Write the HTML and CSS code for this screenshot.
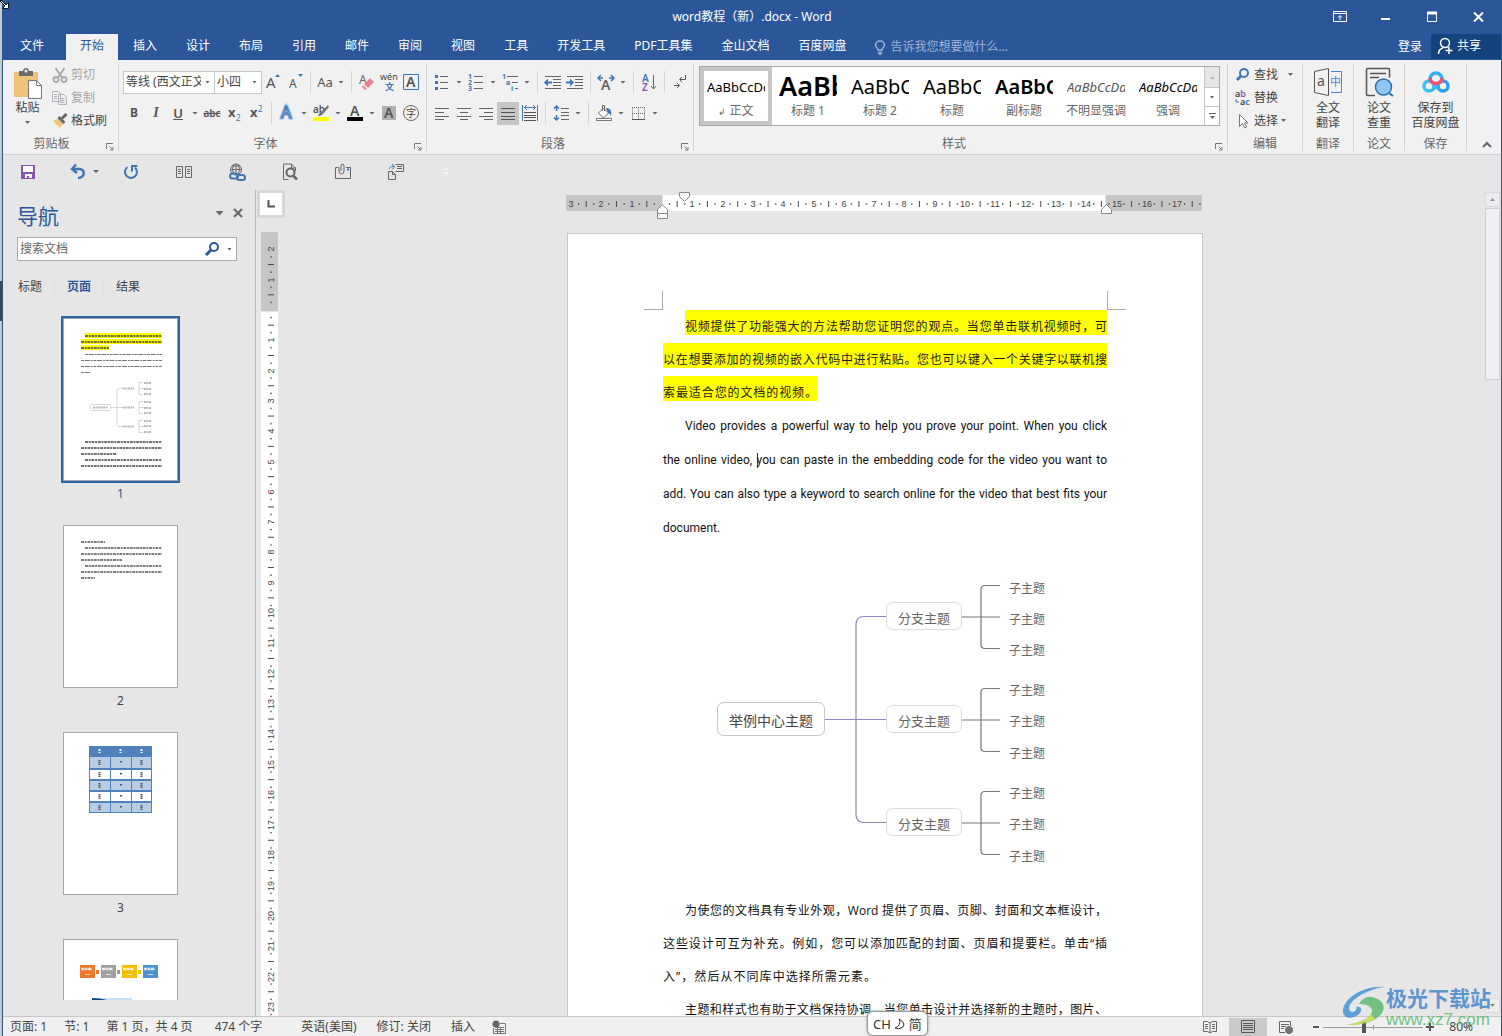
FILE: index.html
```html
<!DOCTYPE html>
<html lang="zh-CN">
<head>
<meta charset="utf-8">
<title>word教程（新）.docx - Word</title>
<link rel="stylesheet" href="styles.css">
</head>
<body>
<div class="window">
  <header class="titlebar">
    <h1 class="doc-name">word教程（新）.docx - Word</h1>
    <div class="win-buttons">
      <button class="win-btn" aria-label="功能区显示选项"><svg width="14" height="12" fill="none" stroke="#fff"><path d="M.5.5h13v10H.5zM1 2.500h12M7 9V5M5 6.500l2-2 2 2"/></svg></button>
      <button class="win-btn" aria-label="最小化"><svg width="10" height="12"><path d="M0 7h9v2H0z" fill="#fff"/></svg></button>
      <button class="win-btn" aria-label="最大化"><svg width="10" height="12" fill="none" stroke="#fff"><path d="M.5 1.500h9v9h-9z"/><path d="M0 2h10" stroke-width="3"/></svg></button>
      <button class="win-btn" aria-label="关闭"><svg width="11" height="12" fill="none" stroke="#fff" stroke-width="2"><path d="M1 1.500l9 9M10 1.500l-9 9"/></svg></button>
    </div>
  </header>

  <nav class="tabs">
    <button class="tab file">文件</button>
    <button class="tab active">开始</button>
    <button class="tab">插入</button>
    <button class="tab">设计</button>
    <button class="tab">布局</button>
    <button class="tab">引用</button>
    <button class="tab">邮件</button>
    <button class="tab">审阅</button>
    <button class="tab">视图</button>
    <button class="tab">工具</button>
    <button class="tab">开发工具</button>
    <button class="tab">PDF工具集</button>
    <button class="tab">金山文档</button>
    <button class="tab">百度网盘</button>
    <button class="tell-me"><svg width="12" height="15" fill="none" stroke="#9db4d8" stroke-width="1.500"><path d="M4 10C4 8 1.500 7.500 1.500 4.800A4.200 4.200 0 0 1 6 1a4.200 4.200 0 0 1 4.500 3.800C10.500 7.500 8 8 8 10zM4 12.500h4M4.500 14h3"/></svg>告诉我您想要做什么...</button>
    <button class="sign-in">登录</button>
    <button class="share"><svg width="17" height="18" fill="none" stroke="#fff" stroke-width="1.500"><circle cx="8" cy="6" r="4.500"/><path d="M1.500 17c0-4 2.500-5.500 4.500-6M8.500 13.500h7M12 10v7"/></svg>共享</button>
  </nav>

  <div class="ribbon">
    <section class="group clipboard">
      <div class="clip-body">
        <button class="paste">
          <svg width="30" height="32"><path d="M1 4h24v25H1z" fill="#eec47b"/><path d="M6 3h4c0-4 6-4 6 0h4v5H6z" fill="#6b6b6b"/><circle cx="13" cy="3" r="1.500" fill="#f1f1f1"/><path d="M15.500 12.500h8l5 5v13h-13z" fill="#fff" stroke="#777"/><path d="M23.500 12.500v5h5" fill="none" stroke="#777"/></svg>
          <span>粘贴</span><i class="caret"></i>
        </button>
        <div class="stack">
          <button class="row-btn dim"><svg width="16" height="16" fill="none" stroke="#a9a9a9" stroke-width="1.800"><path d="M3.500 1l6.500 9.500M12.500 1L6 10.500"/><circle cx="4" cy="12.500" r="2.500"/><circle cx="12" cy="12.500" r="2.500"/></svg>剪切</button>
          <button class="row-btn dim"><svg width="16" height="16" fill="#f1f1f1" stroke="#b3aeb6"><path d="M.5 1.500h6l2 2v8h-8zM6.500 4.500h5l3 3v7h-8z"/><path d="M2 4.500h3M2 6.500h3M2 8.500h3M8.500 8.500h4M8.500 10.500h4M8.500 12.500h4"/></svg>复制</button>
          <button class="row-btn"><svg width="16" height="16"><path d="M1 8l5-2.500 5 5L8 15z" fill="#eec47b"/><path d="M5.500 5l2-2 6 6-2 2z" fill="#666"/><path d="M10 5.500L14.500 1" stroke="#666" stroke-width="3"/></svg>格式刷</button>
        </div>
      </div>
      <footer class="group-name opens">剪贴板<svg class="launcher" width="8" height="8"><path d="M.5 6V.5H7M3.500 3.500l3 3M7 4v3H4" fill="none" stroke="#777"/></svg></footer>
    </section>

    <section class="group font">
      <div class="tool-row">
        <label class="combo face"><input aria-label="字体" value="等线 (西文正文)"><i class="caret"></i></label>
        <label class="combo size"><input aria-label="字号" value="小四"><i class="caret"></i></label>
        <button class="tool"><svg width="18" height="18"><text x="2" y="15" font-size="15" fill="#555">A</text><path d="M11 4l2.500-3L16 4z" fill="#3f77b5"/></svg></button>
        <button class="tool"><svg width="18" height="18"><text x="3" y="15" font-size="12" fill="#555">A</text><path d="M12 1l2.500 3L17 1z" fill="#3f77b5"/></svg></button>
        <i class="sep"></i>
        <button class="tool case">Aa</button><i class="caret drop"></i>
        <i class="sep"></i>
        <button class="tool"><svg width="18" height="18"><text x="1" y="11" font-size="12" fill="#666">A</text><path d="M6 11l6-6 4 4-6 6z" fill="#e88394"/><path d="M5 12l4 4-2 1-3-3z" fill="#e88394"/></svg></button>
        <button class="tool"><svg width="20" height="20"><text x="1" y="8" font-size="9" fill="#444">wén</text><text x="6" y="18" font-size="9" font-weight="700" fill="#3f77b5">文</text></svg></button>
        <button class="tool"><svg width="18" height="18"><path d="M1.500 1.500h15v15h-15z" fill="none" stroke="#3f77b5"/><text x="4" y="14" font-size="14" font-weight="600" fill="#555">A</text></svg></button>
      </div>
      <div class="tool-row">
        <button class="tool bold">B</button>
        <button class="tool italic">I</button>
        <button class="tool under">U</button><i class="caret drop"></i>
        <button class="tool strike">abc</button>
        <button class="tool bold"><svg width="18" height="18"><text x="3" y="13" font-size="13" font-weight="700" fill="#555">x</text><text x="11" y="17" font-size="8" font-weight="400" fill="#3f77b5">2</text></svg></button>
        <button class="tool bold"><svg width="18" height="18"><text x="3" y="13" font-size="13" font-weight="700" fill="#555">x</text><text x="11" y="8" font-size="8" font-weight="400" fill="#3f77b5">2</text></svg></button>
        <i class="sep"></i>
        <button class="tool"><svg width="18" height="18"><text x="3" y="14" font-size="16" fill="#fff" stroke="#9dc3e6" stroke-width="3">A</text><text x="3" y="14" font-size="16" fill="#fff" stroke="#3f77b5">A</text></svg></button><i class="caret drop"></i>
        <button class="tool"><svg width="18" height="18"><text x="1" y="9" font-size="10" font-weight="600" fill="#555">ab</text><path d="M16 1l1 2-7 8-2-2z" fill="#777"/><path d="M8 9l2 2-4 1z" fill="#444"/><path d="M1 13h16v4H1z" fill="#ff0"/></svg></button><i class="caret drop"></i>
        <button class="tool"><svg width="18" height="18"><text x="4" y="12" font-size="14" font-weight="600" fill="#555">A</text><path d="M1 13h16v4H1z"/></svg></button><i class="caret drop"></i>
        <button class="tool"><svg width="18" height="18"><path d="M2 2h14v14H2z" fill="#b1b1b1"/><text x="4" y="14" font-size="14" font-weight="600" fill="#555">A</text></svg></button>
        <button class="tool"><svg width="18" height="18"><circle cx="9" cy="9" r="7.500" fill="none" stroke="#666"/><text x="4" y="13" font-size="10" fill="#444">字</text></svg></button>
      </div>
      <footer class="group-name opens">字体<svg class="launcher" width="8" height="8"><path d="M.5 6V.5H7M3.500 3.500l3 3M7 4v3H4" fill="none" stroke="#777"/></svg></footer>
    </section>

    <section class="group para">
      <div class="tool-row">
        <button class="tool"><svg width="18" height="18"><path d="M2 2h3v3H2zM2 8h3v3H2zM2 14h3v3H2z" fill="#3f77b5"/><path d="M7 3.500h8M7 9.500h8M7 15.500h8" stroke="#666"/></svg></button><i class="caret drop"></i>
        <button class="tool"><svg width="18" height="18"><text x="1" y="6" font-size="7" font-weight="700" fill="#3f77b5">1</text><text x="1" y="12" font-size="7" font-weight="700" fill="#3f77b5">2</text><text x="1" y="18" font-size="7" font-weight="700" fill="#3f77b5">3</text><path d="M7 3.500h9M7 9.500h9M7 15.500h9" stroke="#666"/></svg></button><i class="caret drop"></i>
        <button class="tool"><svg width="18" height="18"><text x="1" y="6" font-size="7" font-weight="700" fill="#3f77b5">1</text><text x="5" y="12" font-size="7" font-weight="700" fill="#3f77b5">a</text><text x="10" y="18" font-size="7" font-weight="700" fill="#3f77b5">i</text><path d="M6 3.500h11M11 9.500h6M14 15.500h3" stroke="#666"/></svg></button><i class="caret drop"></i>
        <i class="sep"></i>
        <button class="tool"><svg width="18" height="18"><path d="M1 3.500h16M9 6.500h8M9 9.500h8M9 12.500h8M1 15.500h16" stroke="#666"/><path d="M8 8.500H4v-3l-4 4 4 4v-3h4z" fill="#3f77b5"/></svg></button>
        <button class="tool"><svg width="18" height="18"><path d="M1 3.500h16M9 6.500h8M9 9.500h8M9 12.500h8M1 15.500h16" stroke="#666"/><path d="M0 8.500h4v-3l4 4-4 4v-3H0z" fill="#3f77b5"/></svg></button>
        <i class="sep"></i>
        <button class="tool"><svg width="18" height="18"><text x="4" y="17" font-size="14" font-weight="600" fill="#666">A</text><path d="M4 2L1 5l3 3M1 5h5M14 2l3 3-3 3M17 5h-5" fill="none" stroke="#3f77b5" stroke-width="1.500"/></svg></button><i class="caret drop"></i>
        <i class="sep"></i>
        <button class="tool"><svg width="18" height="18"><text x="2" y="9" font-size="10" font-weight="600" fill="#3f77b5">A</text><text x="2" y="18" font-size="10" font-weight="600" fill="#8a4fb0">Z</text><path d="M13.500 2v14M11 13l2.500 3 2.500-3" fill="none" stroke="#666"/></svg></button>
        <i class="sep"></i>
        <button class="tool"><svg width="18" height="18" fill="none" stroke="#555"><path d="M14.500 2v4.500H9M11 4L8.500 6.500 11 9M3 12.500h5M6 10l2.500 2.500L6 15"/></svg></button>
      </div>
      <div class="tool-row">
        <button class="tool"><svg width="18" height="18" stroke="#666"><path d="M2 4.500h14M2 8.500h9M2 12.500h14M2 15.500h9"/></svg></button>
        <button class="tool"><svg width="18" height="18" stroke="#666"><path d="M2 4.500h14M5 8.500h8M2 12.500h14M5 15.500h8"/></svg></button>
        <button class="tool"><svg width="18" height="18" stroke="#666"><path d="M2 4.500h14M7 8.500h9M2 12.500h14M7 15.500h9"/></svg></button>
        <button class="tool pressed"><svg width="18" height="18" stroke="#555"><path d="M2 4.500h14M2 8.500h14M2 12.500h14M2 15.500h14"/></svg></button>
        <button class="tool"><svg width="18" height="18" fill="none" stroke="#3f77b5"><path d="M1.500 1v16M16.500 1v16M4 3.500h10M6 1L3.500 3.500 6 6M12 1l2.500 2.500L12 6"/><path d="M3 8.500h12M3 11.500h12M3 13.500h12M3 16.500h12" stroke="#555"/></svg></button>
        <i class="sep"></i>
        <button class="tool"><svg width="18" height="18" fill="none" stroke="#3f77b5" stroke-width="1.500"><path d="M4.500 2v5M2 4.500L4.500 2 7 4.500M4.500 16v-5M2 13.500L4.500 16 7 13.500"/><path d="M9 4.500h8M9 8.500h8M9 11.500h8M9 15.500h8" stroke="#666" stroke-width="1"/></svg></button><i class="caret drop"></i>
        <i class="sep"></i>
        <button class="tool"><svg width="18" height="18"><path d="M3.500 9l5-5 5 5-5 5z" fill="#fff" stroke="#666"/><path d="M7.500 7V1.500h2V7" fill="none" stroke="#666"/><path d="M11 4c4 0 6 2 5 8-1-2-2-3-3-3z" fill="#3f77b5"/><path d="M1.500 14.500h15v2h-15z" fill="#fff" stroke="#777"/></svg></button><i class="caret drop"></i>
        <button class="tool"><svg width="18" height="18"><path d="M3.500 3.500v12M9.500 3.500v12M15.500 3.500v12M3 3.500h13M3 9.500h13" fill="none" stroke="#666" stroke-dasharray="1 1"/><path d="M3 15.500h13" stroke="#555"/></svg></button><i class="caret drop"></i>
      </div>
      <footer class="group-name opens">段落<svg class="launcher" width="8" height="8"><path d="M.5 6V.5H7M3.500 3.500l3 3M7 4v3H4" fill="none" stroke="#777"/></svg></footer>
    </section>

    <section class="group styles">
      <div class="gallery">
        <button class="style selected"><span class="sample">AaBbCcDd</span><span class="style-name"><small>↲</small> 正文</span></button>
        <button class="style"><span class="sample h1">AaBb</span><span class="style-name">标题 1</span></button>
        <button class="style"><span class="sample h2">AaBbC</span><span class="style-name">标题 2</span></button>
        <button class="style"><span class="sample h2">AaBbC</span><span class="style-name">标题</span></button>
        <button class="style"><span class="sample sub">AaBbC</span><span class="style-name">副标题</span></button>
        <button class="style"><span class="sample soft">AaBbCcDd</span><span class="style-name">不明显强调</span></button>
        <button class="style"><span class="sample em">AaBbCcDd</span><span class="style-name">强调</span></button>
        <div class="gallery-nav">
          <button class="off" aria-label="上一行"><i class="caret up"></i></button>
          <button aria-label="下一行"><i class="caret"></i></button>
          <button class="more" aria-label="其他"><svg width="7" height="7"><path d="M0 0h7v1H0zM1 3h5L3.500 6z" fill="#666"/></svg></button>
        </div>
      </div>
      <footer class="group-name opens">样式<svg class="launcher" width="8" height="8"><path d="M.5 6V.5H7M3.500 3.500l3 3M7 4v3H4" fill="none" stroke="#777"/></svg></footer>
    </section>

    <section class="group edit">
      <div class="stack">
        <button class="row-btn"><svg width="16" height="16" fill="none" stroke="#3f77b5"><circle cx="9" cy="6" r="4" stroke-width="2"/><path d="M6 9l-4 4" stroke-width="3"/></svg>查找<i class="caret far"></i></button>
        <button class="row-btn"><svg width="16" height="16"><text x="0" y="7" font-size="9" font-weight="600" fill="#444">a<tspan fill="#8a4fb0">b</tspan></text><text x="5" y="15" font-size="9" font-weight="600" fill="#444">a<tspan fill="#3f77b5">c</tspan></text><path d="M1 9v3h3" fill="none" stroke="#3f77b5"/></svg>替换</button>
        <button class="row-btn"><svg width="16" height="16"><path d="M4.500 1.500v12l3-3 2 4.500 2-1-2-4h3.500z" fill="#fff" stroke="#777"/></svg>选择<i class="caret"></i></button>
      </div>
      <footer class="group-name">编辑</footer>
    </section>

    <section class="group narrow">
      <button class="big">
        <svg width="30" height="30" fill="none"><path d="M1.500 4.500l14-3v27l-14-3z" stroke="#555"/><path d="M18 4.500h10.500v21H18" stroke="#4a86d8"/><text x="4" y="19" font-size="14" fill="#555">a</text><text x="17" y="19" font-size="11" fill="#4a86d8">中</text></svg>
        <span>全文</span><span>翻译</span>
      </button>
      <footer class="group-name">翻译</footer>
    </section>
    <section class="group narrow">
      <button class="big">
        <svg width="30" height="30" fill="none"><path d="M11 28.500H3.500q-1 0-1-1V2.500q0-1 1-1h21q1 0 1 1v8" stroke="#555" stroke-width="1.500"/><path d="M6 6.500h16M6 10.500h9" stroke="#555" stroke-width="1.500"/><circle cx="19.500" cy="20" r="8" fill="#90c6f7" stroke="#2a6fad" stroke-width="1.500"/><path d="M25 26l4 3" stroke="#2a6fad" stroke-width="2"/></svg>
        <span>论文</span><span>查重</span>
      </button>
      <footer class="group-name">论文</footer>
    </section>
    <section class="group save">
      <button class="big">
        <svg width="30" height="30" fill="none" stroke-width="3.500"><circle cx="8" cy="19" r="5" stroke="#3cc0f5"/><circle cx="22" cy="19" r="5" stroke="#2a9df4"/><path d="M9 12a6 6 0 0 1 12 0" stroke="#35aef5"/><path d="M10 15l8 8M20 15l-8 8" stroke="#35aef5" stroke-width="2"/><path d="M9 11a6 5.500 0 1 0 12 0" stroke="#f2506e"/></svg>
        <span>保存到</span><span>百度网盘</span>
      </button>
      <footer class="group-name">保存</footer>
    </section>
    <button class="collapse" aria-label="折叠功能区"><svg width="10" height="6" fill="none" stroke="#666" stroke-width="2"><path d="M1 5l4-4 4 4"/></svg></button>
  </div>

  <div class="quick">
    <button class="qbtn" aria-label="保存"><svg width="18" height="18"><path d="M2 2h14v14H2z" fill="#8852b0"/><path d="M4 3h10v6H4zM6 11h7v4H6z" fill="#fff"/><path d="M8 13h2v3H8z" fill="#8852b0"/></svg></button>
    <button class="qbtn undo" aria-label="撤消"><svg width="18" height="18" fill="none" stroke="#3f77b5" stroke-width="2.500"><path d="M7 1.500L3 6l5 4M3 6h7c7 0 6 9-1 9"/></svg></button><i class="caret drop"></i>
    <button class="qbtn redo" aria-label="重复"><svg width="18" height="18" fill="none" stroke="#3f77b5" stroke-width="2"><path d="M5.500 4a6 6 0 1 0 7.500 0.500"/><path d="M10 8.500V3h5.500" stroke-width="2"/></svg></button>
    <button class="qbtn" aria-label="双页"><svg width="18" height="18" fill="none" stroke="#666"><path d="M1.500 3.500h6v11h-6zM10.500 3.500h6v11h-6zM3 6.500h3M3 8.500h3M3 10.500h3M12 6.500h3M12 8.500h3M12 10.500h3"/></svg></button>
    <button class="qbtn" aria-label="超链接"><svg width="18" height="18" fill="none" stroke="#666"><circle cx="8" cy="6.500" r="5.500"/><path d="M2.500 6.500h11M8 1v10M4 3h8M5.500 2q-2 4.500 0 9M10.500 2q2 4.500 0 9"/><g stroke="#3f77b5" stroke-width="2"><rect x="2" y="10.500" width="8" height="5" rx="2.500"/><rect x="9" y="12" width="8" height="5" rx="2.500"/></g></svg></button>
    <button class="qbtn" aria-label="打印预览"><svg width="18" height="18" fill="none" stroke="#666"><path d="M14.500 8V5l-4-4h-8v15.500h5M10.500 1v4h4"/><circle cx="9.500" cy="9.500" r="4" stroke-width="2"/><path d="M12 12.500l4 4" stroke-width="2.500"/></svg></button>
    <button class="qbtn" aria-label="附件"><svg width="18" height="18" fill="none" stroke="#666"><path d="M4 4.500H1.500v11h15v-11H12"/><path d="M5 4v4q0 3 2.500 3T10 8V3Q10 1 8.500 1T7 3v5"/><path d="M13 6.500h2" stroke="#3f77b5" stroke-width="2"/></svg></button>
    <button class="qbtn" aria-label="文档转换"><svg width="18" height="18" fill="none" stroke="#666"><path d="M8.500 1.500h8v7h-8M10 3.500h5M10 5.500h5M1.500 8.500h4l3 3v5h-7zM5.500 8.500v3h3"/><path d="M2 5.500q2-3 5-2M5 6.500l2.500-2.500L5 1" stroke="#3f77b5"/></svg></button>
    <button class="qbtn more" aria-label="自定义快速访问工具栏"><svg width="6" height="6"><path d="M0 0h6v1H0zM1 3h5L3.500 6z" fill="#f4f4f4"/></svg></button>
  </div>

  <main class="work">
    <aside class="nav">
      <div class="nav-head"><h2>导航</h2><i class="caret wide"></i><button aria-label="关闭导航"><svg width="10" height="10" stroke="#666" stroke-width="2"><path d="M1 1l8 8M9 1L1 9"/></svg></button></div>
      <label class="search"><input placeholder="搜索文档" aria-label="搜索文档"><svg width="16" height="16" fill="none" stroke="#2b579a"><circle cx="10" cy="6" r="4" stroke-width="2"/><path d="M7 9l-5 5" stroke-width="3"/></svg><i class="caret"></i></label>
      <div class="nav-tabs"><button>标题</button><button class="on">页面</button><button>结果</button></div>
      <div class="thumbs">
        <figure class="thumb current">
          <svg viewBox="0 0 113 161">
            <path d="M21 14h77v5H21zM17 20h81v5H17zM17 26h28v5H17z" fill="#ff0"/>
            <g fill="none" stroke="#444" stroke-width="1.500" stroke-dasharray="3 .7 2 .7"><path d="M21 17h77M17 23h81M17 29h28M21 123h77M17 129h81M17 135h36M21 141h77M17 147h81"/></g>
            <g fill="none" stroke="#777" stroke-dasharray="3 .7 5 1 2 .7"><path d="M21 35.500h77M17 41.500h81M17 47.500h81M17 53.500h10"/></g>
            <g fill="none" stroke="#d6d6d6"><rect x="26.500" y="85.500" width="20" height="6" rx="1"/><path d="M47 88.500h12M59 69.500q-6-1-6 2v34q0 3 6 2M75 69.500h8M75 88.500h8M75 107.500h8M79 63.500h-4v12h4M79 82.500h-4v12h4M79 101.500h-4v12h4"/></g>
            <g stroke="#bbb" stroke-width="2" stroke-dasharray="2 .5"><path d="M29 88.500h15M59 69.500h11M59 88.500h11M59 107.500h11M80 64h7M80 70h7M80 75h7M80 83h7M80 89h7M80 94h7M80 102h7M80 107h7M80 113h7"/></g>
          </svg>
          <figcaption>1</figcaption>
        </figure>
        <figure class="thumb">
          <svg viewBox="0 0 113 161"><g fill="none" stroke="#555" stroke-width="1.500" stroke-dasharray="3 .7 2 .7"><path d="M17 16h24M21 22h77M17 28h81M17 34h41M21 40h77M17 46h81M17 52h14"/></g></svg>
          <figcaption>2</figcaption>
        </figure>
        <figure class="thumb">
          <svg viewBox="0 0 113 161">
            <path d="M25 13h63v67H25z" fill="#4f81bd"/><path d="M26 24h20v11H26zM47 24h20v11H47zM68 24h19v11H68zM26 48h20v9H26zM47 48h20v9H47zM68 48h19v9H68zM26 70h20v9H26zM47 70h20v9H47zM68 70h19v9H68z" fill="#b8cce4"/><path d="M26 37h20v9H26zM47 37h20v9H47zM68 37h19v9H68zM26 59h20v9H26zM47 59h20v9H47zM68 59h19v9H68z" fill="#fff"/>
            <path d="M35.500 16v4M56.500 16v4M77.500 16v4" stroke="#fff" stroke-width="2" stroke-dasharray="2 1"/><path d="M35.500 27v5M77.500 27v5M35.500 39v5M77.500 39v5M35.500 50v5M77.500 50v5M35.500 61v5M77.500 61v5M35.500 72v5M77.500 72v5M57 28v2M57 40v2M57 51v2M57 62v2M57 73v2" stroke="#555" stroke-width="2" stroke-dasharray="1.500 .5"/>
          </svg>
          <figcaption>3</figcaption>
        </figure>
        <figure class="thumb">
          <svg viewBox="0 0 113 161">
            <path d="M16 25h15v13H16z" fill="#f0762b"/><path d="M37 25h15v13H37z" fill="#a0a0a0"/><path d="M58 25h15v13H58z" fill="#f5bd00"/><path d="M79 25h15v13H79z" fill="#4e92d2"/>
            <path d="M32 30h3v4h-3z" fill="#f0762b"/><path d="M53 30h3v4h-3z" fill="#999"/><path d="M74 30h3v4h-3z" fill="#f5bd00"/>
            <path d="M17 29h11M38 29h11M59 29h11M80 29h11" stroke="#fff" stroke-width="2.500" opacity=".8" stroke-dasharray="3 .5"/><path d="M21 34.500h5M42 34.500h5M63 34.500h5M84 34.500h5" stroke="#fff" opacity=".7"/>
            <path d="M28 58h40v9H28z" fill="#c5e1f7"/><path d="M28 58q10 0 18 3H28z" fill="#104a7c"/>
          </svg>
        </figure>
      </div>
    </aside>

    <div class="side-ruler">
      <button class="tab-kind" aria-label="制表符"><svg width="8" height="8"><path d="M1.500 0v6.500H8" fill="none" stroke="#555" stroke-width="2"/></svg></button>
      <svg class="vruler" width="17" height="800">
        <defs><pattern id="vt" x="0" y="78" width="17" height="30.300" patternUnits="userSpaceOnUse"><path d="M7 15.100h6M9 7.500h2M9 22.700h2" stroke="#444"/></pattern></defs>
        <path d="M0 0h17v79H0z" fill="#c6c6c6"/><path d="M0 80h17v720H0z" fill="#fff"/><path d="M0 22h17v778H0z" fill="url(#vt)"/>
        <g class="num" transform="rotate(-90)">
          <text x="-17" y="13">2</text><text x="-48" y="13">1</text><text x="-108" y="13">1</text><text x="-139" y="13">2</text><text x="-169" y="13">3</text><text x="-199" y="13">4</text><text x="-230" y="13">5</text><text x="-260" y="13">6</text><text x="-290" y="13">7</text><text x="-320" y="13">8</text><text x="-351" y="13">9</text><text x="-381" y="13">10</text><text x="-411" y="13">11</text><text x="-442" y="13">12</text><text x="-472" y="13">13</text><text x="-502" y="13">14</text><text x="-533" y="13">15</text><text x="-563" y="13">16</text><text x="-593" y="13">17</text><text x="-623" y="13">18</text><text x="-654" y="13">19</text><text x="-684" y="13">20</text><text x="-714" y="13">21</text><text x="-745" y="13">22</text><text x="-775" y="13">23</text>
        </g>
      </svg>
    </div>

    <div class="canvas">
      <svg class="hruler" width="638" height="30">
        <defs><pattern id="ht" x="96" y="0" width="30.300" height="30" patternUnits="userSpaceOnUse"><path d="M15.100 10v6M7.500 12v2M22.700 12v2" stroke="#444"/></pattern></defs>
        <path d="M0 4h96v16H0zM540 4h96v16h-96z" fill="#c6c6c6"/><path d="M97 4h442v16H97z" fill="#fff"/><path d="M10 4h626v16H10z" fill="url(#ht)"/>
        <g class="num"><text x="5" y="16">3</text><text x="35" y="16">2</text><text x="66" y="16">1</text><text x="126" y="16">1</text><text x="157" y="16">2</text><text x="187" y="16">3</text><text x="217" y="16">4</text><text x="248" y="16">5</text><text x="278" y="16">6</text><text x="308" y="16">7</text><text x="338" y="16">8</text><text x="369" y="16">9</text><text x="399" y="16">10</text><text x="429" y="16">11</text><text x="460" y="16">12</text><text x="490" y="16">13</text><text x="520" y="16">14</text><text x="551" y="16">15</text><text x="581" y="16">16</text><text x="611" y="16">17</text></g>
        <g fill="#fff" stroke="#888"><path d="M113.500 1.500h10v4l-5 5-5-5zM96.500 13.500l5 5v9h-10v-9zM91.500 22.500h10M540.500 13.500l5 5v4h-10v-4z"/></g>
      </svg>
      <article class="page">
        <div class="corners"><i class="corner left"></i><i class="corner right"></i></div>
        <p class="text"><mark class="ln first">视频提供了功能强大的方法帮助您证明您的观点。当您单击联机视频时，可</mark><mark class="ln">以在想要添加的视频的嵌入代码中进行粘贴。您也可以键入一个关键字以联机搜</mark><mark class="ln short">索最适合您的文档的视频。</mark></p>
        <p class="text english"><span class="ln first">Video provides a powerful way to help you prove your point. When you click</span><span class="ln">the online video, <i class="ibeam"></i>you can paste in the embedding code for the video you want to</span><span class="ln">add. You can also type a keyword to search online for the video that best fits your</span><span class="ln last">document.</span></p>
        <svg class="mindmap" viewBox="0 2 444 349">
          <g fill="none" stroke="#8e86bd" stroke-width="1.200"><path d="M162 176.500h61M223 73.500h-22q-8 0-8 8v190q0 8 8 8h22"/></g>
          <g fill="none" stroke="#777" stroke-width="1.200"><path d="M299 74h38M337 42.500h-15q-4 0-4 4v55q0 4 4 4h15M299 177h38M337 145.500h-15q-4 0-4 4v55q0 4 4 4h15M299 280h38M337 248.500h-15q-4 0-4 4v55q0 4 4 4h15"/></g>
          <g fill="#fff" stroke="#ddd"><rect x="54.500" y="159.500" width="107" height="33" rx="6" stroke="#c4c4c4"/><rect x="223.500" y="59.500" width="75" height="27" rx="6"/><rect x="223.500" y="162.500" width="75" height="27" rx="6"/><rect x="223.500" y="265.500" width="75" height="27" rx="6"/></g>
          <text class="root" x="108" y="183">举例中心主题</text>
          <text class="branch" x="261" y="80">分支主题</text><text class="branch" x="261" y="183">分支主题</text><text class="branch" x="261" y="286">分支主题</text>
          <g class="leaf"><text x="346" y="50">子主题</text><text x="346" y="81">子主题</text><text x="346" y="112">子主题</text><text x="346" y="152">子主题</text><text x="346" y="183">子主题</text><text x="346" y="215">子主题</text><text x="346" y="255">子主题</text><text x="346" y="286">子主题</text><text x="346" y="318">子主题</text></g>
        </svg>
        <p class="text"><span class="ln first">为使您的文档具有专业外观，Word 提供了页眉、页脚、封面和文本框设计，</span><span class="ln">这些设计可互为补充。例如，您可以添加匹配的封面、页眉和提要栏。单击“插</span><span class="ln mid">入”，然后从不同库中选择所需元素。</span></p>
        <p class="text"><span class="ln first">主题和样式也有助于文档保持协调。当您单击设计并选择新的主题时，图片、</span></p>
      </article>
    </div>

    <div class="scroll"><button class="up" aria-label="向上滚动"><i class="caret up"></i></button><div class="bar"></div><button aria-label="向下滚动"><i class="caret"></i></button></div>
  </main>

  <footer class="status">
    <span>页面: 1</span><span>节: 1</span><span>第 1 页，共 4 页</span><span class="words">474 个字</span><span class="mode">英语(美国)</span><span class="mode">修订: 关闭</span><span>插入</span>
    <svg width="14" height="14"><circle cx="4" cy="4" r="3.500" fill="#666"/><path d="M8 3.500h5.500v10h-12V8M3 7.500h9M3 9.500h9M3 11.500h9M5.500 7v6M8.500 7v6" fill="none" stroke="#777"/></svg>
    <div class="views">
      <button aria-label="阅读视图"><svg width="14" height="14" fill="none" stroke="#666"><path d="M.5 1.500h4L7 3l2.500-1.500h4v10h-4L7 13l-2.500-1.500h-4zM7 3v10M2 4.500h3M2 6.500h3M2 8.500h3M9 4.500h3M9 6.500h3M9 8.500h3"/></svg></button>
      <button class="on" aria-label="页面视图"><svg width="14" height="14" fill="none" stroke="#555"><path d="M.5.5h13v12H.5zM2 3.500h10M2 5.500h10M2 7.500h10M2 9.500h10"/></svg></button>
      <button aria-label="Web 版式视图"><svg width="14" height="14" fill="none" stroke="#666"><path d="M6 12.500H.5V1.500h11V6M2 4.500h8M2 6.500h5M2 8.500h3"/><circle cx="10" cy="10" r="3.500" fill="#777"/></svg></button>
    </div>
    <button class="zoom" aria-label="缩小"><svg width="8" height="8"><path d="M1 3h6v2H1z" fill="#555"/></svg></button>
    <input class="slider" type="range" min="0" max="200" value="80" aria-label="缩放">
    <button class="zoom" aria-label="放大"><svg width="8" height="8"><path d="M0 3h8v2H0zM3 0h2v8H3z" fill="#555"/></svg></button>
    <span class="percent">80%</span>
  </footer>
</div>

<div class="ime"><span>CH</span><svg width="12" height="12" fill="none" stroke="#333"><path d="M5 1q3 6-4 9 4 2 8-1 3-4-4-8z"/></svg><span>简</span></div>
<div class="watermark">
  <svg width="44" height="40"><path d="M43 1C20-1 0 14 1 26c1 8 12 7 17 1 3-5 0-7-4-6 2 3-3 7-6 4C3 18 20 4 43 1z" fill="#3d8fd6"/><path d="M30 11c14 3 15 14 5 21-8 6-20 7-30 7 10-2 20-5 24-11 4-7-4-10-12-10 2-4 8-8 13-7z" fill="#53b96a"/><path d="M5 39c10-2 20-5 24-11l4 5c-8 5-18 6-28 6z" fill="#c5d94d"/><path d="M43 1C25 3 14 12 9 22 14 10 28 4 43 1z" fill="#a8dcf5"/></svg>
  <div><strong>极光下载站</strong><em>www.xz7.com</em></div>
</div>
<i class="desk-mark"></i>
<svg class="pointer" width="10" height="10"><path d="M0 1l5 5-2.500 2.500h6V2.500L6 5 1 0z" fill="#fff" stroke="#111"/></svg>
</body>
</html>
```
FILE: styles.css
```css
* { box-sizing: border-box; }

body {
  margin: 0;
  height: 100vh;
  overflow: hidden;
  position: relative;
  background: #c9c9c9;
  color: #444;
  font: 12px/16px "Noto Sans", "Noto Sans CJK SC", sans-serif;
}

button, input {
  font: inherit;
  color: inherit;
  border: 0;
  padding: 0;
  margin: 0;
  background: none;
}

h1, h2, p, figure { margin: 0; font-weight: 400; }
svg { display: block; flex: none; }
button svg { overflow: visible; }

.window {
  height: 100vh;
  margin-left: 2px;
  border: solid #2b579a;
  border-width: 0 1px;
  display: flex;
  flex-direction: column;
  background: #e6e6e6;
}

.caret {
  flex: none;
  width: 5px;
  height: 3px;
  background: #666;
  clip-path: polygon(0 0, 100% 0, 50% 100%);
}
.caret.up { transform: rotate(180deg); }
.caret.wide { width: 9px; height: 5px; }
.caret.drop { width: 12px; clip-path: polygon(3px 0, 9px 0, 6px 100%); }

/* Title bar and tabs */
.titlebar {
  height: 34px;
  flex: none;
  display: grid;
  grid-template-columns: 1fr auto 1fr;
  align-items: center;
  background: #2b579a;
  color: #fff;
}
.doc-name { grid-column: 2; font-size: 12px; line-height: 16px; }
.win-buttons { display: flex; justify-content: flex-end; }
.win-btn { width: 46px; height: 32px; display: grid; place-items: center; }

.tabs {
  height: 26px;
  flex: none;
  display: flex;
  gap: 1px;
  background: #2b579a;
  color: #fff;
}
.tab { padding: 0 14px 2px; white-space: nowrap; }
.tab.file { width: 62px; padding-right: 18px; }
.tab.active { background: #f1f1f1; color: #2b579a; }
.tell-me { display: flex; align-items: center; gap: 4px; margin-left: 13px; color: #9db4d8; }
.sign-in { margin-left: auto; padding-right: 8px; }
.share {
  width: 70px;
  height: 25px;
  display: flex;
  align-items: center;
  gap: 3px;
  padding: 0 0 2px 6px;
  background: #14427d;
}

/* Ribbon */
.ribbon {
  height: 95px;
  flex: none;
  display: flex;
  padding: 4px 0 3px;
  background: #f1f1f1;
  border-bottom: 1px solid #d2d2d2;
}
.group {
  flex: none;
  display: flex;
  flex-direction: column;
  border-right: 1px solid #d4d4d4;
}
.clipboard { width: 116px; }
.font { width: 308px; padding-left: 4px; }
.para { width: 267px; padding-left: 4px; }
.styles { flex: 1; padding-left: 5px; }
.edit { width: 75px; }
.narrow { width: 51px; }
.save { width: 62px; }
.group-name {
  margin-top: auto;
  height: 14px;
  line-height: 14px;
  text-align: center;
  color: #666;
  position: relative;
}
.group-name.opens { padding-right: 18px; }
.launcher { position: absolute; right: 4px; bottom: 0; }

.clip-body { display: flex; }
.paste {
  width: 49px;
  display: flex;
  flex-direction: column;
  align-items: center;
  padding-top: 4px;
}
.paste span { margin-bottom: 5px; }
.stack { display: flex; flex-direction: column; }
.row-btn { height: 23px; display: flex; align-items: center; gap: 3px; padding-bottom: 2px; white-space: nowrap; }
.row-btn .far { margin-left: 7px; }
.dim { color: #a6a6a6; }
.edit .stack { padding-left: 7px; }

.tool-row { height: 31px; display: flex; align-items: center; padding-top: 5px; }
.tool {
  width: 22px;
  height: 23px;
  flex: none;
  display: grid;
  place-items: center;
  color: #555;
}
.tool.case { width: 20px; font-size: 13px; }
.tool.bold { font-weight: 700; font-size: 12px; }
.tool.italic { font: italic 700 14px "Liberation Serif", serif; }
.tool.under { font-weight: 600; font-size: 13px; text-decoration: underline; }
.tool.strike { font-size: 10px; font-weight: 600; text-decoration: line-through; }
.tool.pressed { background: #c6c6c6; }
.sep { flex: none; width: 1px; height: 22px; margin: 0 4px; background: #d4d4d4; }

.combo {
  height: 23px;
  display: flex;
  align-items: center;
  padding: 0 4px 0 2px;
  background: #fff;
  border: 1px solid #c6c6c6;
}
.combo input { min-width: 0; flex: 1; }
.combo .caret { margin-left: 4px; }
.face { width: 92px; }
.size { width: 47px; border-left: 0; }

.gallery {
  display: flex;
  height: 60px;
  margin: 2px 7px 0 0;
  background: #fff;
  border: 1px solid #ababab;
}
.style {
  width: 72px;
  flex: none;
  display: flex;
  flex-direction: column;
  align-items: center;
  padding-top: 5px;
}
.style.selected { border: 4px solid #c6c6c6; padding-top: 1px; }
.sample {
  width: 58px;
  height: 31px;
  overflow: hidden;
  white-space: nowrap;
  text-align: left;
  color: #000;
  font-size: 13px;
  line-height: 30px;
}
.sample.h1 { font-size: 27px; font-weight: 600; line-height: 28px; }
.sample.h2 { font-size: 20px; }
.sample.sub { font-size: 20px; font-weight: 600; }
.sample.soft { font-style: italic; color: #555; }
.sample.em { font-style: italic; }
.style-name { color: #666; white-space: nowrap; }
.style-name small { font-size: 9px; }
.gallery-nav { width: 15px; margin-left: auto; display: grid; grid-template-rows: 21px 19px 18px; }
.gallery-nav button { display: grid; place-items: center; border: solid #c6c6c6; border-width: 0 0 1px 1px; }
.gallery-nav .off { background: #e6e6e6; }
.gallery-nav .off .caret { background: #bbb; }
.gallery-nav .more { border-bottom: 0; }

.big {
  display: flex;
  flex-direction: column;
  align-items: center;
  padding-top: 3px;
  line-height: 15px;
}
.big svg { margin-bottom: 3px; }
.collapse { align-self: flex-end; margin: 0 9px 3px 15px; }

/* Quick access bar */
.quick { height: 35px; flex: none; display: flex; align-items: center; gap: 35px; padding: 0 0 2px 16px; }
.qbtn { width: 18px; height: 18px; display: grid; place-items: center; }
.qbtn.undo { margin-left: -3px; }
.quick .drop { margin-left: -32px; }
.qbtn.redo { margin-left: -15px; }
.qbtn.more { margin-left: -3px; }

/* Work area */
.work { flex: 1; min-height: 0; display: flex; overflow: hidden; }
.nav {
  width: 253px;
  flex: none;
  display: flex;
  flex-direction: column;
  border-right: 1px solid #bababa;
  padding: 12px 18px 16px 14px;
}
.nav-head { height: 28px; display: flex; align-items: center; gap: 9px; padding-bottom: 6px; }
.nav-head h2 { flex: 1; font-size: 21px; line-height: 28px; padding-top: 5px; color: #2b579a; }
.nav-head button { margin-right: -6px; }
.search {
  height: 24px;
  flex: none;
  display: flex;
  align-items: center;
  gap: 7px;
  margin-top: 7px;
  padding: 0 4px 0 2px;
  background: #fff;
  border: 1px solid #ababab;
}
.search input { flex: 1; min-width: 0; }
.search input::placeholder { color: #666; opacity: 1; }
.nav-tabs { display: flex; height: 20px; margin-top: 16px; gap: 12px; }
.nav-tabs button { padding: 0 12px 0 0; border-right: 1px solid #e0e0e0; }
.nav-tabs button:first-child { padding-left: 1px; }
.nav-tabs .on { color: #2b579a; font-weight: 700; }
.nav-tabs button:last-child { border: 0; }
.thumbs { flex: 1; min-height: 0; overflow: hidden; margin-top: 17px; padding: 4px 0 0 46px; }
.thumb { height: 207px; width: 115px; }
.thumb svg { width: 115px; height: 163px; background: #fff; border: 1px solid #a0a7b0; }
.thumb.current svg { outline: 2px solid #2b65a3; }
.thumb figcaption { text-align: center; margin-top: 5px; font-size: 12px; }
.thumb.current figcaption { color: #2b579a; }

.side-ruler { width: 29px; flex: none; padding: 0 0 0 1px; }
.tab-kind {
  width: 28px;
  height: 28px;
  display: grid;
  place-items: center;
  background: #fff;
  border: 3px solid #d8d8d8;
}
.vruler { margin: 14px 0 0 4px; }
.num { font: 9px "Liberation Sans", sans-serif; fill: #444; text-anchor: middle; }

.canvas { flex: 1; min-width: 0; overflow: hidden; }
.hruler { margin: 1px auto 12px; }
.page {
  width: 636px;
  height: 900px;
  margin: 0 auto;
  padding: 57px 95px 0;
  background: #fff;
  border: 1px solid #c6c6c6;
}
.corners { display: flex; justify-content: space-between; margin: 0 -19px; }
.corner { width: 19px; height: 19px; border-bottom: 1px solid #ababab; }
.corner.left { border-right: 1px solid #ababab; }
.corner.right { border-left: 1px solid #ababab; }
.text { color: #111; font-family: "Open Sans", "Noto Sans CJK SC", sans-serif; }
.ln {
  display: block;
  height: 33px;
  line-height: 33px;
  text-align-last: justify;
  white-space: nowrap;
}
.ln.first { margin-left: 22px; }
.ln.last { text-align-last: left; }
.ln.mid { width: 213px; }
.english { font-family: Roboto, sans-serif; }
.english .ln { height: 34px; line-height: 34px; }
mark.ln {
  height: 25px;
  margin-bottom: 8px;
  padding-top: 8px;
  line-height: 17px;
  background: #ff0;
  color: #222;
}
mark.ln.short { width: 154px; }
.ibeam { display: inline-block; width: 1px; height: 15px; margin-right: -1px; background: #333; vertical-align: middle; }
.mindmap { width: 100%; height: 349px; }
.mindmap text { fill: #666; font-family: "Noto Sans CJK SC", sans-serif; }
.mindmap .root { font-size: 14px; fill: #444; text-anchor: middle; }
.mindmap .branch { font-size: 13px; text-anchor: middle; }
.leaf { font-size: 12px; }

.scroll { width: 16px; flex: none; display: flex; flex-direction: column; padding: 2px 1px 3px 0; }
.scroll button { height: 15px; display: grid; place-items: center; background: #f0f0f0; border: 1px solid #d6d6d6; opacity: .7; }
.bar { height: 172px; margin: 1px 0 auto; background: #f0f0f0; border: 1px solid #cfcfcf; }

/* Status bar */
.status {
  height: 20px;
  flex: none;
  display: flex;
  align-items: center;
  gap: 17px;
  padding: 1px 28px 0 7px;
  background: #f0f0f0;
  border-top: 1px solid #c6c6c6;
  white-space: nowrap;
}
.status .words { margin: 0 22px 0 5px; }
.status .mode { margin-right: 3px; }
.views { display: flex; margin: 0 4px 0 auto; align-self: stretch; }
.views button { width: 38px; display: grid; place-items: center; }
.views .on { background: #c9c9c9; }
.zoom { margin: 0 -14px; }
.slider {
  appearance: none;
  width: 100px;
  height: 12px;
  background: linear-gradient(#999, #999) center / 100% 1px no-repeat, linear-gradient(#999, #999) center / 1px 5px no-repeat;
}
.slider::-webkit-slider-thumb { appearance: none; width: 4px; height: 11px; background: #555; }
.percent { margin-left: 12px; }

/* Floating items */
.ime {
  position: absolute;
  left: 867px;
  bottom: 0;
  height: 25px;
  display: flex;
  align-items: center;
  gap: 3px;
  padding: 0 5px;
  background: #fff;
  border: 1px solid #999;
  border-radius: 6px;
  box-shadow: 0 0 3px #888;
  color: #333;
  font-size: 13px;
}
.watermark {
  position: absolute;
  right: 11px;
  bottom: 6px;
  display: flex;
  opacity: .8;
}
.watermark strong, .watermark em { display: block; font-style: normal; white-space: nowrap; }
.watermark strong { font-size: 21px; line-height: 24px; color: #3d82cc; }
.watermark em { font: 17px/20px "Liberation Sans", sans-serif; color: #53b96a; }
.desk-mark { position: absolute; left: 0; top: 281px; width: 2px; height: 40px; background: #444; }
.pointer { position: absolute; left: 0; top: 0; }
```
